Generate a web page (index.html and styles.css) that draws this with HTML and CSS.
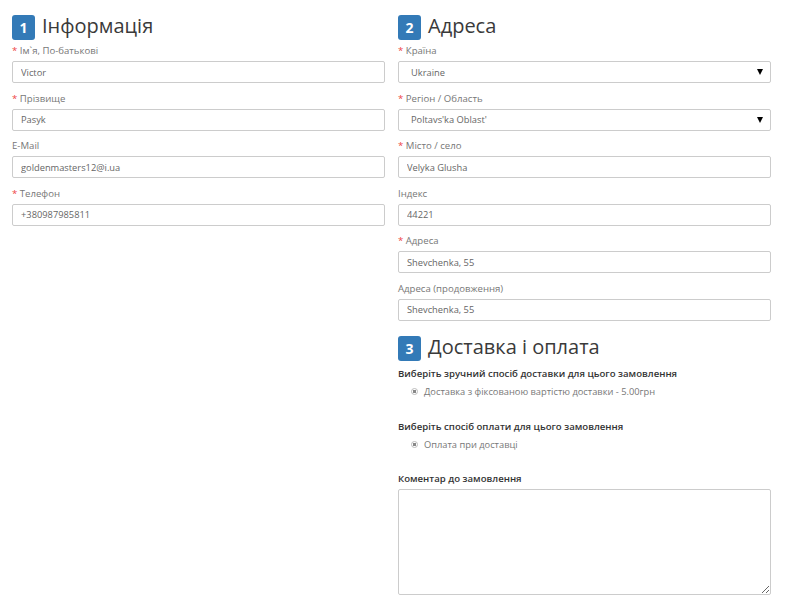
FILE: index.html
```html
<!DOCTYPE html>
<html lang="uk">
<head>
<meta charset="utf-8">
<title>Checkout</title>
<link rel="stylesheet" href="styles.css">
</head>
<body>
<div class="page">
  <section class="col">
    <h2 class="heading"><span class="badge">1</span><span class="title">Інформація</span></h2>
    <div class="field">
      <label class="label"><span class="req">*</span> Ім`я, По-батькові</label>
      <input class="input" type="text" value="Victor">
    </div>
    <div class="field">
      <label class="label"><span class="req">*</span> Прізвище</label>
      <input class="input" type="text" value="Pasyk">
    </div>
    <div class="field">
      <label class="label">E-Mail</label>
      <input class="input" type="text" value="goldenmasters12@i.ua">
    </div>
    <div class="field">
      <label class="label"><span class="req">*</span> Телефон</label>
      <input class="input" type="text" value="+380987985811">
    </div>
  </section>
  <section class="col">
    <h2 class="heading"><span class="badge">2</span><span class="title">Адреса</span></h2>
    <div class="field">
      <label class="label"><span class="req">*</span> Країна</label>
      <div class="select-wrap">
        <select class="input select"><option>Ukraine</option></select>
      </div>
    </div>
    <div class="field">
      <label class="label"><span class="req">*</span> Регіон / Область</label>
      <div class="select-wrap">
        <select class="input select"><option>Poltavs'ka Oblast'</option></select>
      </div>
    </div>
    <div class="field">
      <label class="label"><span class="req">*</span> Місто / село</label>
      <input class="input" type="text" value="Velyka Glusha">
    </div>
    <div class="field">
      <label class="label">Індекс</label>
      <input class="input" type="text" value="44221">
    </div>
    <div class="field">
      <label class="label"><span class="req">*</span> Адреса</label>
      <input class="input" type="text" value="Shevchenka, 55">
    </div>
    <div class="field">
      <label class="label">Адреса (продовження)</label>
      <input class="input" type="text" value="Shevchenka, 55">
    </div>

    <h2 class="heading"><span class="badge">3</span><span class="title">Доставка і оплата</span></h2>
    <p class="strong first">Виберіть зручний спосіб доставки для цього замовлення</p>
    <label class="radio"><input type="radio" name="ship" checked> Доставка з фіксованою вартістю доставки - 5.00грн</label>
    <p class="strong gap">Виберіть спосіб оплати для цього замовлення</p>
    <label class="radio"><input type="radio" name="pay" checked> Оплата при доставці</label>
    <p class="strong gap">Коментар до замовлення</p>
    <textarea class="comment"></textarea>
  </section>
</div>
</body>
</html>
```

FILE: styles.css
```css
* { box-sizing: border-box; }

html, body {
  margin: 0;
  padding: 0;
  background: #fff;
}

body {
  font-family: "Open Sans", "Liberation Sans", sans-serif;
  color: #777;
  font-size: 10px;
}

.page {
  display: grid;
  grid-template-columns: 373px 373px;
  column-gap: 13px;
  padding: 8px 0 0 12px;
}

.col {
  display: flex;
  flex-direction: column;
}

.heading {
  display: flex;
  align-items: center;
  height: 36px;
  margin: 0;
  font-weight: 400;
}

.badge {
  display: inline-flex;
  align-items: center;
  justify-content: center;
  width: 23px;
  height: 25px;
  background: #337ab7;
  color: #fff;
  border-radius: 3px;
  font-size: 14px;
  font-weight: 700;
  margin-right: 7px;
  margin-top: 2px;
}

.title {
  font-size: 20px;
  color: #3a3a3a;
  line-height: 1;
  font-weight: 400;
}

.field {
  display: flex;
  flex-direction: column;
  margin-bottom: 8.5px;
}

.label {
  line-height: 14px;
  height: 14px;
  margin-bottom: 3px;
  color: #777;
  font-size: 9.6px;
}

.req {
  color: #e44;
}

.input {
  height: 22px;
  width: 100%;
  border: 1px solid #ccc;
  border-radius: 2px;
  padding: 0 8px;
  font-family: "Open Sans", "Liberation Sans", sans-serif;
  font-size: 9.3px;
  color: #666;
  background: #fff;
  margin: 0;
  outline: none;
}

.select-wrap {
  position: relative;
}

.select {
  appearance: none;
  -webkit-appearance: none;
  padding-left: 12px;
}

.select-wrap::after {
  content: "";
  position: absolute;
  right: 8px;
  top: 8px;
  width: 0;
  height: 0;
  border-left: 3.5px solid transparent;
  border-right: 3.5px solid transparent;
  border-top: 6px solid #000;
  pointer-events: none;
}

.strong {
  margin: 0;
  line-height: 14px;
  font-weight: 600;
  color: #333;
  font-size: 9.6px;
}

.strong.first {
  margin-top: 2px;
}

.strong.gap {
  margin-top: 19px;
}

.radio {
  display: flex;
  align-items: center;
  height: 18px;
  margin-top: 1.5px;
  padding-left: 13px;
  color: #777;
  font-size: 9.3px;
}

.radio input {
  appearance: none;
  -webkit-appearance: none;
  width: 7px;
  height: 7px;
  margin: 0 6px 0 0;
  border: 1px solid #bbb;
  border-radius: 50%;
  background: radial-gradient(circle, #888 0 1.5px, #fff 2px);
}

.comment {
  margin-top: 3px;
  height: 106px;
  width: 100%;
  border: 1px solid #ccc;
  border-radius: 2px;
  resize: both;
  font-family: "Open Sans", "Liberation Sans", sans-serif;
}
```
